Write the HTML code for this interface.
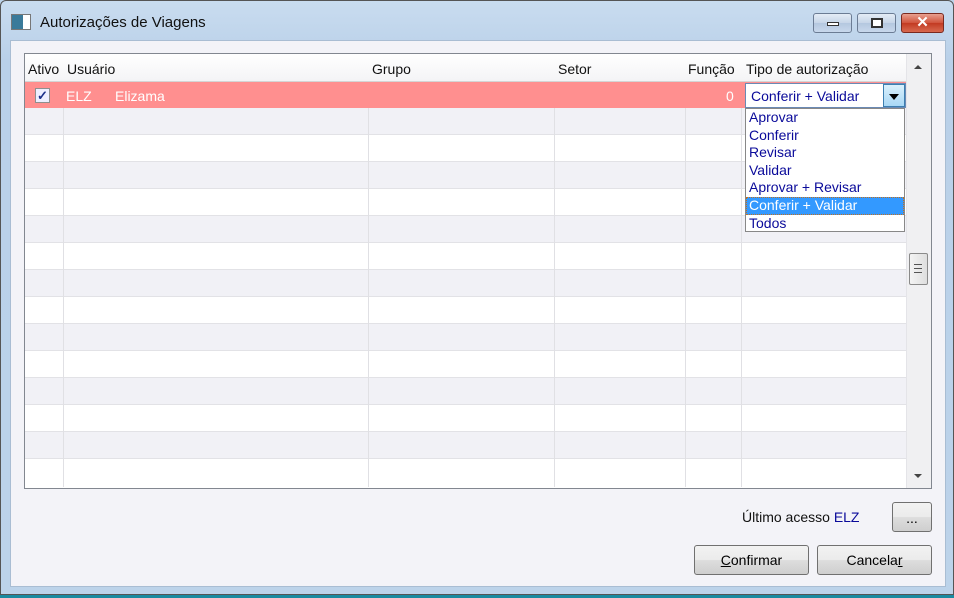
<!DOCTYPE html>
<html><head><style>
*{margin:0;padding:0;box-sizing:border-box}
body{width:954px;height:598px;overflow:hidden;background:#bcd3ea;font-family:"Liberation Sans",sans-serif;font-size:13px;position:relative}
.a{position:absolute}
.frame{left:0;top:0;width:954px;height:596px;background:linear-gradient(#c9dcef,#b9d0e9 60px,#bcd3ea);border:1px solid #555;border-radius:6px 6px 0 0}
.client{left:10px;top:40px;width:936px;height:547px;background:#f3f3f8;border:1px solid #a9bdd3}
.btn{border:1px solid #707070;border-radius:3px;background:linear-gradient(#f2f2f2,#ebebeb 50%,#dddddd 51%,#cfcfcf);text-align:center;font-size:14px;color:#000}
.wb{top:13px;height:20px;border:1px solid #6b7c94;border-radius:3px;background:linear-gradient(#e4ecf6,#c6d5e8 50%,#b4c7df 51%,#c8d8ec)}
.row{left:25px;width:881px;height:27px;border-bottom:1px solid #e2e2e6}
.vl{width:1px;background:#e0e0e4;top:82px;height:405px}
.dd div{height:17.6px;line-height:17.6px;padding-left:3px;color:#0a0a9a;font-size:14px}
</style></head><body>
<div class="a frame"></div>
<div class="a" style="left:11px;top:14px;width:20px;height:16px;border:1px solid #777;background:linear-gradient(90deg,#3a7a9a 60%,#fff 60%)"></div>
<div class="a" style="left:40px;top:14px;font-size:15px;color:#111">Autorizações de Viagens</div>
<div class="a wb" style="left:813px;width:39px"><div class="a" style="left:13px;top:8px;width:12px;height:4px;border:1px solid #333;background:#fff"></div></div>
<div class="a wb" style="left:857px;width:39px"><div class="a" style="left:13px;top:4px;width:12px;height:10px;border:2px solid #333;background:#fff"></div></div>
<div class="a" style="left:901px;top:13px;width:43px;height:20px;border:1px solid #7a2a20;border-radius:3px;background:linear-gradient(#e8a090,#d0533c 50%,#c23a22 51%,#d86a50);color:#fff;font-weight:bold;font-size:15px;text-align:center;line-height:18px">✕</div>
<div class="a client"></div>
<div class="a" style="left:24px;top:53px;width:908px;height:436px;border:1px solid #828790;background:#fff"></div>
<div class="a" style="left:25px;top:54px;width:881px;height:28px;background:linear-gradient(#fff,#f4f4f6);border-bottom:1px solid #d5d5d5;font-size:14px;line-height:30px;color:#111">
<span class="a" style="left:3px">Ativo</span><span class="a" style="left:42px">Usuário</span><span class="a" style="left:347px">Grupo</span><span class="a" style="left:533px">Setor</span><span class="a" style="left:663px">Função</span><span class="a" style="left:721px">Tipo de autorização</span></div>
<div class="a" style="left:25px;top:82px;width:881px;height:26px;background:#ff8f8f"></div>
<div class="a row" style="top:108px;background:#f1f1f6"></div>
<div class="a row" style="top:135px"></div>
<div class="a row" style="top:162px;background:#f1f1f6"></div>
<div class="a row" style="top:189px"></div>
<div class="a row" style="top:216px;background:#f1f1f6"></div>
<div class="a row" style="top:243px"></div>
<div class="a row" style="top:270px;background:#f1f1f6"></div>
<div class="a row" style="top:297px"></div>
<div class="a row" style="top:324px;background:#f1f1f6"></div>
<div class="a row" style="top:351px"></div>
<div class="a row" style="top:378px;background:#f1f1f6"></div>
<div class="a row" style="top:405px"></div>
<div class="a row" style="top:432px;background:#f1f1f6"></div>
<div class="a row" style="top:459px;border:none"></div>
<div class="a vl" style="left:63px;top:108px;height:379px"></div>
<div class="a vl" style="left:368px;top:108px;height:379px"></div>
<div class="a vl" style="left:554px;top:108px;height:379px"></div>
<div class="a vl" style="left:685px;top:108px;height:379px"></div>
<div class="a vl" style="left:741px;top:108px;height:379px"></div>
<div class="a" style="left:35px;top:88px;width:15px;height:15px;border:1px solid #8f8f8f;background:#eef;color:#1c2f8a;font-size:13px;line-height:13px;text-align:center;font-weight:bold">✓</div>
<div class="a" style="left:66px;top:88px;color:#fff;font-size:14px">ELZ</div>
<div class="a" style="left:115px;top:88px;color:#fff;font-size:14px">Elizama</div>
<div class="a" style="left:726px;top:88px;color:#fff;font-size:14px">0</div>
<div class="a" style="left:745px;top:83px;width:161px;height:25px;border:1px solid #6a8ab5;background:#fff"><span class="a" style="left:5px;top:4px;color:#0a0a9a;font-size:14px">Conferir + Validar</span>
<div class="a" style="left:137px;top:0;width:22px;height:23px;border:1px solid #3c7fb1;background:linear-gradient(#d9f0fc,#a9d8f5)"><div class="a" style="left:5px;top:9px;border:5px solid transparent;border-top:6px solid #000"></div></div></div>
<div class="a dd" style="left:745px;top:108px;width:160px;height:124px;border:1px solid #888;background:#fff">
<div>Aprovar</div><div>Conferir</div><div>Revisar</div><div>Validar</div><div>Aprovar + Revisar</div><div style="background:#3399ff;color:#fff;outline:1px dotted #c07020;outline-offset:-1px">Conferir + Validar</div><div>Todos</div></div>
<div class="a" style="left:906px;top:54px;width:25px;height:434px;background:#f0f0f2;border-left:1px solid #e4e4e8"></div>
<div class="a" style="left:914px;top:65px;border:4px solid transparent;border-bottom:4px solid #444;border-top:0"></div>
<div class="a" style="left:914px;top:474px;border:4px solid transparent;border-top:4px solid #444;border-bottom:0"></div>
<div class="a" style="left:909px;top:253px;width:19px;height:32px;border:1px solid #8a8a8a;border-radius:2px;background:linear-gradient(90deg,#f4f4f4,#dedede)"><div class="a" style="left:4px;top:10px;width:8px;height:9px;border-top:1px solid #555;border-bottom:1px solid #555"></div><div class="a" style="left:4px;top:14px;width:8px;height:1px;background:#555"></div></div>
<div class="a" style="left:742px;top:509px;font-size:14px;color:#111">Último acesso <span style="color:#0a0a9a">ELZ</span></div>
<div class="a btn" style="left:892px;top:502px;width:40px;height:30px;line-height:30px">...</div>
<div class="a btn" style="left:694px;top:545px;width:115px;height:30px;line-height:29px"><u>C</u>onfirmar</div>
<div class="a btn" style="left:817px;top:545px;width:115px;height:30px;line-height:29px">Cancela<u>r</u></div>
<div class="a" style="left:0;top:594px;width:954px;height:4px;background:#1a8aa0;border-top:1px solid #555"></div>
</body></html>
